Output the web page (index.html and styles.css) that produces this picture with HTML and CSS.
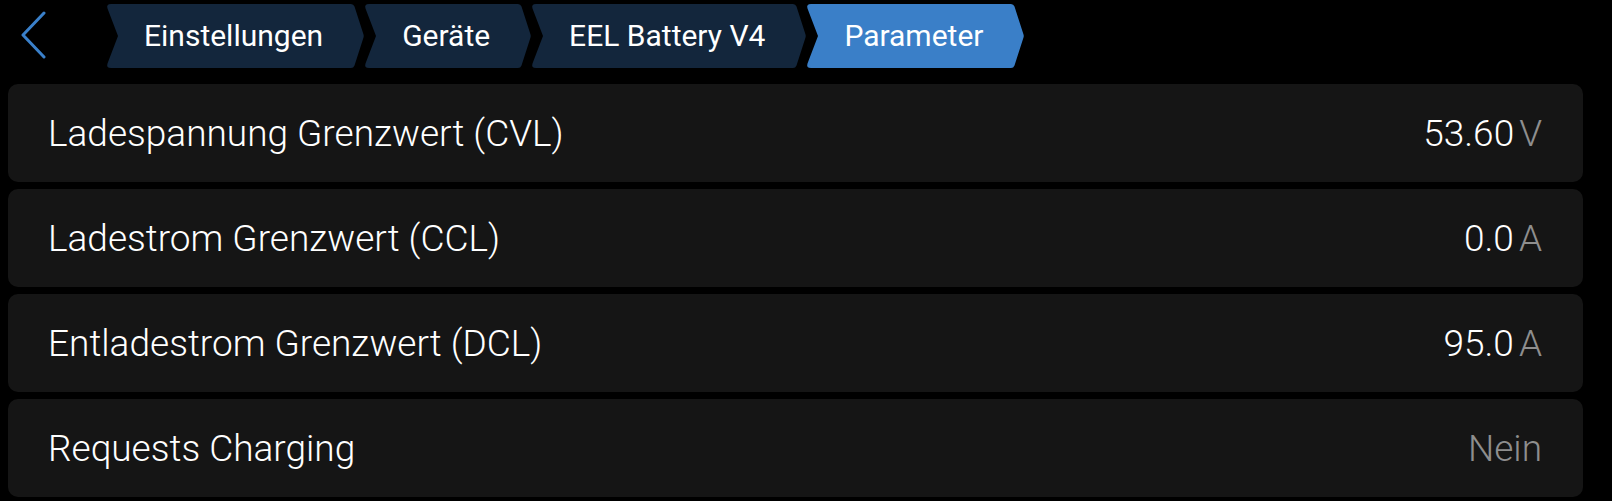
FILE: index.html
```html
<!DOCTYPE html>
<html lang="de">
<head>
<meta charset="utf-8">
<title>Parameter</title>
<link rel="stylesheet" href="styles.css">
</head>
<body>
<div class="page">
  <header class="header">
    <button class="back" aria-label="Zurück">
      <svg width="30" height="50" viewBox="0 0 30 50"><path d="M24 2 L3 24 L24 46" fill="none" stroke="#3a80ca" stroke-width="3" stroke-linecap="round" stroke-linejoin="round"/></svg>
    </button>
    <nav class="crumbs">
      <div class="crumb">
        <svg class="cap" width="13" height="64" viewBox="0 0 13 64"><path d="M13 0 H5 Q0 0 1.5 4.5 L12 32 L1.5 59.5 Q0 64 5 64 H13 Z"/></svg>
        <span class="crumb-text">Einstellungen</span>
        <svg class="tip" width="14" height="64" viewBox="0 0 14 64"><path d="M0 0 H1 Q3.5 0 4.5 2.5 L13.5 30.5 Q14 32 13.5 33.5 L4.5 61.5 Q3.5 64 1 64 H0 Z"/></svg>
      </div>
      <div class="crumb">
        <svg class="cap" width="13" height="64" viewBox="0 0 13 64"><path d="M13 0 H5 Q0 0 1.5 4.5 L12 32 L1.5 59.5 Q0 64 5 64 H13 Z"/></svg>
        <span class="crumb-text">Geräte</span>
        <svg class="tip" width="14" height="64" viewBox="0 0 14 64"><path d="M0 0 H1 Q3.5 0 4.5 2.5 L13.5 30.5 Q14 32 13.5 33.5 L4.5 61.5 Q3.5 64 1 64 H0 Z"/></svg>
      </div>
      <div class="crumb">
        <svg class="cap" width="13" height="64" viewBox="0 0 13 64"><path d="M13 0 H5 Q0 0 1.5 4.5 L12 32 L1.5 59.5 Q0 64 5 64 H13 Z"/></svg>
        <span class="crumb-text">EEL Battery V4</span>
        <svg class="tip" width="14" height="64" viewBox="0 0 14 64"><path d="M0 0 H1 Q3.5 0 4.5 2.5 L13.5 30.5 Q14 32 13.5 33.5 L4.5 61.5 Q3.5 64 1 64 H0 Z"/></svg>
      </div>
      <div class="crumb crumb-active">
        <svg class="cap" width="13" height="64" viewBox="0 0 13 64"><path d="M13 0 H5 Q0 0 1.5 4.5 L12 32 L1.5 59.5 Q0 64 5 64 H13 Z"/></svg>
        <span class="crumb-text">Parameter</span>
        <svg class="tip" width="14" height="64" viewBox="0 0 14 64"><path d="M0 0 H1 Q3.5 0 4.5 2.5 L13.5 30.5 Q14 32 13.5 33.5 L4.5 61.5 Q3.5 64 1 64 H0 Z"/></svg>
      </div>
    </nav>
  </header>

  <main class="list">
    <div class="row">
      <span class="label">Ladespannung Grenzwert (CVL)</span>
      <span class="value">53.60<span class="unit">V</span></span>
    </div>
    <div class="row">
      <span class="label">Ladestrom Grenzwert (CCL)</span>
      <span class="value">0.0<span class="unit">A</span></span>
    </div>
    <div class="row">
      <span class="label">Entladestrom Grenzwert (DCL)</span>
      <span class="value">95.0<span class="unit">A</span></span>
    </div>
    <div class="row">
      <span class="label">Requests Charging</span>
      <span class="value value-muted">Nein</span>
    </div>
  </main>
</div>
</body>
</html>
```

FILE: styles.css
```css
* { box-sizing: border-box; }

html, body {
  margin: 0;
  padding: 0;
  background: #000;
}

body {
  font-family: Roboto, "Noto Sans", "Liberation Sans", sans-serif;
  color: #fff;
  width: 1612px;
  height: 501px;
  overflow: hidden;
}

.page {
  padding: 4px 29px 0 8px;
}

.header {
  display: flex;
  align-items: center;
  height: 64px;
}

.back {
  display: flex;
  align-items: center;
  justify-content: flex-start;
  width: 60px;
  height: 64px;
  padding: 0 0 0 12px;
  margin: 0;
  background: none;
  border: 0;
}

.crumbs {
  display: flex;
  gap: 0;
  margin-left: 38px;
}

.crumb {
  display: flex;
  align-items: center;
  height: 64px;
  color: #fff;
  fill: #13263c;
}

.crumb-active {
  fill: #3a7fc8;
}

.cap, .tip {
  display: block;
  flex: none;
}

.crumb-text {
  display: flex;
  align-items: center;
  height: 64px;
  padding: 0 27px 0 25px;
  background: #13263c;
  font-size: 30px;
  line-height: 1;
  white-space: nowrap;
}

.crumb-active .crumb-text {
  background: #3a7fc8;
}

.list {
  display: flex;
  flex-direction: column;
  gap: 7px;
  margin-top: 16px;
}

.row {
  display: flex;
  align-items: center;
  justify-content: space-between;
  height: 98px;
  padding: 0 41px 0 40px;
  background: #151515;
  border-radius: 10px;
}

.label {
  font-size: 37px;
  font-weight: 300;
  color: #fff;
  white-space: nowrap;
}

.value {
  font-size: 37px;
  font-weight: 300;
  color: #fff;
  white-space: nowrap;
}

.unit {
  color: #8e8e8e;
  margin-left: 5px;
}

.value-muted {
  color: #8e8e8e;
}
```
